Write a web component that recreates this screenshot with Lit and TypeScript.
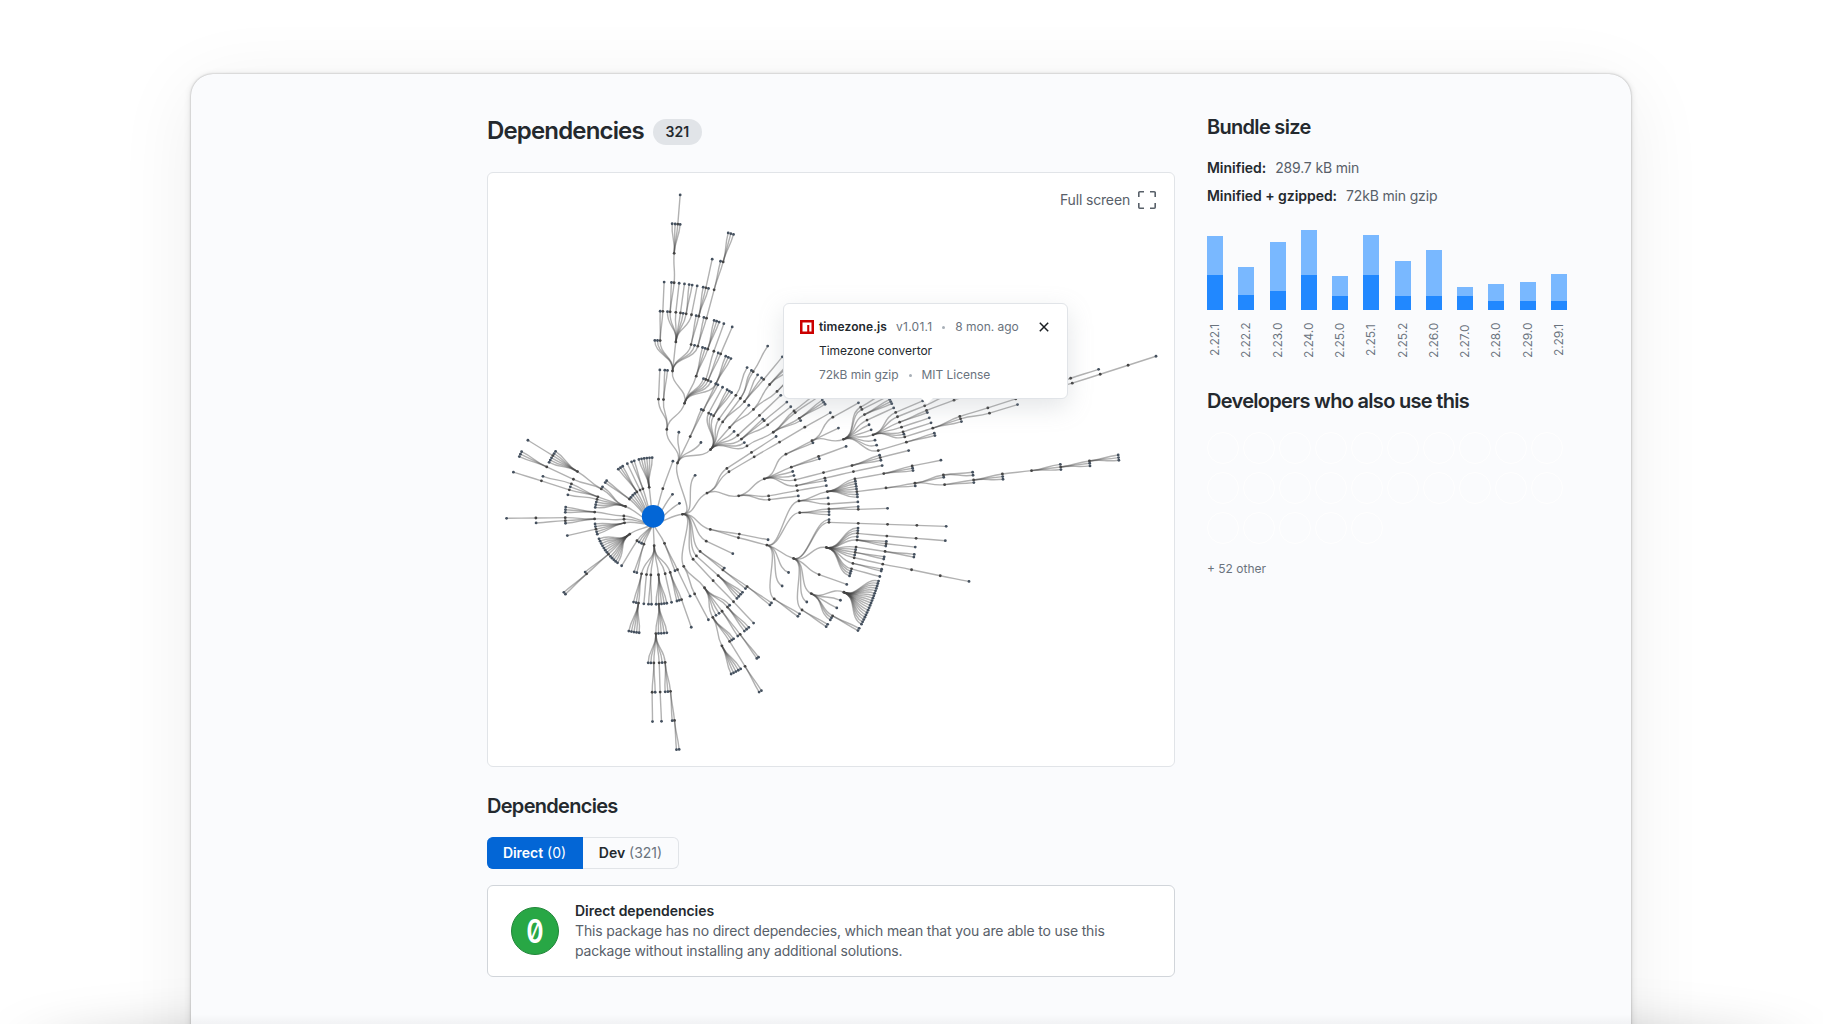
import { LitElement, html, css, svg } from "lit";
import { customElement } from "lit/decorators.js";

type Pt = { x: number; y: number };
interface TreeNode {
  angle: number;
  radius: number;
  children: TreeNode[];
}

// The canvas is divided into tiles; every node is given in the local units of its tile.
const TILES: Record<string, [number, number]> = {
  a: [-520, -1249],
  b: [-40, -709],
  c: [-490, -289],
  d: [-160, 71],
  e: [260, -409],
  f: [350, -679],
};
const RING = 87.95;
const LEAF_GAP = 7.7;

// "x,y" is a node, "x,y~x,y" is a fan of evenly spaced siblings, "( ... )" holds children.
const GRAPH = `
c 577,283 (
  b 113,549 (
    81,448 (
      56,358 ( 60,269 )
      71,358 ( 75,271 83,271 )
      134,370 (
        a 578,813 (
          525,721 533,721 541,721 ( 541,633 549,633 ( 553,545 ) )
          588,726 (
            563,635 571,635 ( 575,547 583,547 ( 583,460 ( 577,371 586,372 594,372 ( 601,285 ) 601,373 ) ) )
            588,637 ( 598,549 ) 602,638 ( 614,551 ) 610,640
            619,642 ( 628,553 637,555 ) 635,644 ( 652,558 )
          )
          634,733 ( 649,647 657,649 ( 670,562 678,564 ( 697,478 ) 686,565 ) )
          644,737
          654,739 ( 672,653 680,655 ( 703,569 ( 722,484 730,486 ( 745,399~761,403 ) ) ) )
        )
        a 649,829 ( 668,743 676,745 684,747 ( 703,661~718,666 ) )
        671,836 678,838 ( 702,754 ( 732,671 ) )
        685,841 ( 715,759 722,763 ( 757,681 ) ) 693,845
        708,852 ( 738,768~753,776 )
      )
    )
    b 117,457
    151,470 ( 184,389 190,392 ( 228,312 234,315 ) )
    183,488
    212,509 (
      206,400 ( 248,322 ) 213,404
      221,408 ( 262,329~275,338 )
      237,418 ( 288,346 ( 321,264 ) )
      249,425 ( 301,356 ( 335,271 340,275 ( 383,199 ) ) 313,366 ( 353,285 365,294 371,299 ( 427,231 ) ) )
      269,443 ( 326,377 340,389 ( 389,314 ( 448,248 452,251 462,260 ) 411,335 ( 472,267 474,272 ) ) )
      282,455
      293,467 ( 358,407 ( 422,347 ) )
      304,478 ( 368,418 372,423 ( 440,367 ) 383,435 ( 452,381 ) )
      312,489
      320,499 ( 400,457 ( 462,393 ( 530,340 ) 466,398 ( 536,350 ) 477,416 ( 546,361~554,374 ) 482,422 ) )
    )
  )
  c 615,167
  b 200,640 (
    260,566 ( 334,518 ( 408,470 ) )
    266,576 ( 342,531 ( 418,487 ( 494,442 ( 570,399 ) ) ) )
    295,648 (
      372,597 (
        437,523 (
          515,483 (
            578,412 ( 655,369 )
            594,445
            611,478 (
              e 361,82 ( 437,36 ) 365,89 ( 444,49 )
              373,104 ( 446,60~454,72 )
              380,121 ( 461,84 )
              386,135 393,150
              398,165 (
                466,98 ( 546,64 ) 471,111 ( 553,78 ( 632,40 ) )
                478,127 ( 559,92 ( 641,61 ( 725,32 ) ) 562,98 )
                484,142 ( 567,114 ) 488,156 ( 572,129 ) 491,163
                494,171 (
                  577,145 (
                    658,110 ( f 653,354 ( 737,327 ( 821,300 ( 902,265 ( 986,238 ) 906,280 ( 990,253 ( 1074,226 ( 1158,199 ) ) ) ) ) ) )
                    e 661,117 ( f 657,370 ( 742,344 ) ) e 664,125
                  )
                )
              )
              404,181 409,196
              414,212 ( 498,187 ( 582,160 584,167 ) )
            )
          )
          b 518,489
        )
        453,562 ( e 235,230 ( 317,200 ) 237,237 )
        b 457,575 461,587
        e 165,300 ( 250,278 ( 335,257 ( 418,226 420,233 ( 505,212 ) 422,241 ) ) )
        169,317 ( 253,295 ( 340,275 ( 425,257 ) ) 255,302 )
      )
      b 385,648 ( 471,632 ( 559,617 ) )
      387,659 ( 474,648 )
    )
  )
  c 660,328 (
    747,342 ( e 83,479 )
    c 745,353 (
      e 80,495 (
        175,363 (
          261,335 (
            343,297 ( 430,281 ( 516,258 ( 601,241 ) 517,265 518,272 ) )
            345,304~349,327
            350,335 ( 437,324 ( 524,310 ( 609,285 ( 697,277 698,286 ) 610,292 f 523,584 ( 610,570 ( 697,552 ( 784,542 ( 871,523 871,531 ( 958,513 ( 1044,495~1045,511 ) 958,520 958,528 ) 871,539 ) ) 697,560 698,568 ) 610,578 ) ) e 524,318 ) )
            351,343 352,351
          )
          263,354
          265,372 ( 353,366 )
        )
        178,398 ( 265,387 ( 353,380 354,388 ( 442,385 ) ) 265,395 266,404 )
        160,535 (
          265,419 265,427 ( 354,430 ( 442,433 ( 529,436 ( 618,439 ) ) ) )
          257,502 (
            353,444 353,452 352,460 ( 439,468 ( 527,475 ( 615,482 ) ) ) 351,470
            350,480 ( 437,484 437,491 ( 524,501 ) 436,498 )
            347,501 ( 434,514 ( 522,523~521,531 ) )
            346,509 345,517 ( 431,530~430,537 ) 343,525 341,533 ( 427,552 ( 514,569 ( 600,587 ( 686,604 ) ) ) )
            338,550 ( 424,567~423,573 )
            333,566 ( 418,589 )
            332,573~327,587
          )
          236,583 ( 320,613 )
          213,640 (
            310,636 ( d 836,123~784,252 )
            e 300,660 289,683
            d 697,227 ( 776,264 773,271 ) 694,233 690,239
          )
          e 199,665
          185,689 ( d 682,252 679,260 )
        )
        e 145,577 125,617
        102,656 ( d 598,221 594,229 )
      )
    )
  )
  c 648,363 ( 727,400 )
  629,393 ( 702,443 698,449 ( d 441,139 ( 514,188 509,194 ) 436,145 ) )
  c 618,406 ( 684,466 ( d 427,156~410,174 ) )
  c 609,417 ( 669,481 ( d 400,184 ( 460,248 ) ) )
  c 581,438 (
    d 313,142 (
      388,194 382,200 ( 446,261~432,271 )
      366,213 ( 420,282 ( 475,350 470,354 ) 413,287 )
      357,219 348,225
      339,232 ( 401,296 395,299 388,302 ( 435,378 ( 484,451 477,455 ) ) 366,317 ( 422,386~394,402 ) )
    )
    284,161 ( 325,238 )
  )
)
c 519,206 ( 549,124 ) 547,224 567,251
478,202 ( 447,117~487,113 )
459,206 ( 425,125~433,122 )
450,209 ( 412,130 )
440,214 ( 385,147~398,138 )
434,219~422,231
417,236 ( 349,181 345,187 )
406,259 (
  337,200
  333,206 ( 262,154 ( 196,93 192,100 188,106 ( 113,60 ) 184,113~176,126 ) 249,177 ( 169,140 ( 93,94~87,109 ) ) )
  323,230 ( 243,191 ( 157,168 ) 240,200 237,209 ( 153,182 ( 69,156 ) ) )
  321,238 ( 232,224 )
  319,246~315,262
)
400,288 ( 312,276 ( 225,261~225,277 ) )
401,298 ( 312,297 ( 224,293 ( 137,294 ( 48,295 ) ) 224,302 ( 137,309 ) 225,310 ) )
402,309 ( 313,312 315,320 316,328 ( 231,347 ) 318,336 321,343 )
419,343 ( 326,357~350,398 354,404 ( 285,457 290,462 ( 221,518 226,523 ) ) 360,411~382,430 )
441,363 ( 395,438 ) 448,366~455,370
462,373 ( 433,456 441,458 )
493,377 (
  455,462 ( d 101,187~109,188 116,189 ( 87,273~118,278 ) )
  140,104 ( 132,191 ) 153,104 ( 146,192 155,192 )
  176,104 ( 169,192 177,192 ( 168,281 ( 145,368~153,368 162,368 ( 157,457 ( 158,544 ) 166,457 ) 178,367 ( 181,457 ( 185,544 ) ) 187,367 196,367 ( 196,455~204,454 212,454 ( 217,541 224,541 ( 230,629 238,628 ) ) ) ) 176,280~201,278 ) 185,192~201,190 )
  196,101 ( 215,186 )
  211,97 ( 231,182~238,180 245,178 ( 274,261 ) )
)
c 524,370 ( 555,451 563,449 ( 600,527 ) )
`;

function makeNode(x: number, y: number): TreeNode {
  return {
    angle: Math.atan2(y, x),
    radius: Math.round(Math.hypot(x, y) / RING) * RING,
    children: [],
  };
}

function parseGraph(source: string): TreeNode {
  const root: TreeNode = { angle: Math.PI / 2, radius: 0, children: [] };
  const stack: TreeNode[] = [root];
  let last = root;
  let tile = TILES.a;
  for (const token of source.trim().split(/\s+/)) {
    const parent = stack[stack.length - 1];
    if (token in TILES) tile = TILES[token];
    else if (token === "(") stack.push(last);
    else if (token === ")") stack.pop();
    else {
      const [x0, y0, x1 = x0, y1 = y0] = token.split(/[,~]/).map(Number);
      const steps = Math.round(Math.hypot(x1 - x0, y1 - y0) / LEAF_GAP);
      for (let i = 0; i <= steps; i++) {
        const t = steps ? i / steps : 0;
        last = makeNode(x0 + (x1 - x0) * t + tile[0], y0 + (y1 - y0) * t + tile[1]);
        parent.children.push(last);
      }
    }
  }
  return root;
}

const polar = (angle: number, radius: number): Pt => ({
  x: Math.round(Math.cos(angle) * radius * 10) / 10,
  y: Math.round(Math.sin(angle) * radius * 10) / 10,
});

const links: string[] = [];
const inner: Pt[] = [];
const leaves: Pt[] = [];

function collect(node: TreeNode) {
  const from = polar(node.angle, node.radius);
  for (const child of node.children) {
    const middle = (node.radius + child.radius) / 2;
    const c1 = polar(node.angle, middle);
    const c2 = polar(child.angle, middle);
    const to = polar(child.angle, child.radius);
    links.push(`M${from.x},${from.y}C${c1.x},${c1.y} ${c2.x},${c2.y} ${to.x},${to.y}`);
    (child.children.length ? inner : leaves).push(to);
    collect(child);
  }
}
collect(parseGraph(GRAPH));

@customElement("dependency-graph")
class DependencyGraph extends LitElement {
  static styles = css`
    :host { display: block; height: 100%; }
    svg { display: block; width: 100%; height: 100%; }
    .link { fill: none; stroke: #444; stroke-opacity: 0.42; stroke-width: 4.2; }
    .inner { fill: #444; }
    .leaf { fill: #44505e; }
    .root { fill: #0366d6; }
  `;
  render() {
    return html`<svg viewBox="-495.5 -1030 2058 1779" preserveAspectRatio="xMinYMin meet">
      ${links.map((d) => svg`<path class="link" d=${d}></path>`)}
      ${inner.map((p) => svg`<circle class="inner" cx=${p.x} cy=${p.y} r="4.2"></circle>`)}
      ${leaves.map((p) => svg`<circle class="leaf" cx=${p.x} cy=${p.y} r="4.2"></circle>`)}
      <circle class="root" r="34"></circle>
    </svg>`;
  }
}

const VERSIONS: [string, number, number][] = [
  ["2.22.1", 39, 35], ["2.22.2", 28, 15], ["2.23.0", 49, 19], ["2.24.0", 45, 35],
  ["2.25.0", 20, 14], ["2.25.1", 40, 35], ["2.25.2", 35, 14], ["2.26.0", 46, 14],
  ["2.27.0", 9, 14], ["2.28.0", 17, 9], ["2.29.0", 19, 9], ["2.29.1", 27, 9],
];

@customElement("app-root")
class AppRoot extends LitElement {
  static styles = css`
    :host {
      display: block;
      height: 1024px;
      overflow: hidden;
      position: relative;
      background: #fff;
      color: #24292e;
      font-family: Inter, "Liberation Sans", sans-serif;
      font-size: 14px;
      line-height: 20px;
      letter-spacing: -0.16px;
    }
    * { box-sizing: border-box; }
    h1, h2, p { margin: 0; }
    b { font-weight: 600; letter-spacing: -0.04px; }
    .window {
      width: 1440px;
      height: 1100px;
      margin: 74px 0 0 191px;
      padding: 40px 0 0 296px;
      border-radius: 22px;
      background: #fafbfd;
      box-shadow: 0 0 2px rgba(0, 0, 0, 0.32), 0 1px 7px rgba(0, 0, 0, 0.13), 0 14px 80px rgba(0, 0, 0, 0.07);
      display: grid;
      grid-template-columns: 688px 361px;
      column-gap: 32px;
      align-content: start;
    }
    .floor {
      position: absolute;
      left: 40px;
      right: 40px;
      top: 1044px;
      height: 60px;
      border-radius: 50%;
      box-shadow: 0 0 64px 14px rgba(0, 0, 0, 0.38);
    }
    .fade {
      position: absolute; left: 191px; width: 1440px; bottom: 0; height: 10px;
      background: linear-gradient(rgba(0, 0, 0, 0), rgba(0, 0, 0, 0.035));
    }
    .frame { position: relative; }
    .heading { display: flex; align-items: center; gap: 9px; height: 34px; }
    h1 { font-size: 24px; line-height: 32px; font-weight: 600; letter-spacing: -0.84px; }
    .count {
      height: 26px; width: 49px; margin-top: 2px; border-radius: 13px; background: #e1e4e8;
      font-size: 14px; line-height: 26px; font-weight: 600; text-align: center; letter-spacing: 0;
    }
    .canvas {
      position: relative; height: 595px; margin-top: 24px;
      border: 1px solid #e1e4e8; border-radius: 6px; background: #fff;
    }
    .canvas dependency-graph { height: 593px; width: 686px; }
    .full {
      position: absolute; right: 18px; top: 17px; display: flex; align-items: center; gap: 8px;
      color: #586069; font-size: 14px;
    }
    .full svg { display: block; }
    .tip {
      position: absolute; left: 295px; top: 130px; width: 285px; height: 96px;
      padding: 14px 18px 0 16px; border: 1px solid #e1e4e8; border-radius: 6px; background: #fff;
      box-shadow: 0 8px 24px rgba(149, 157, 165, 0.25);
      font-size: 12px; line-height: 18px; color: #6a737d; letter-spacing: -0.04px;
    }
    .tip::after {
      content: ""; position: absolute; left: 137px; top: 94px;
      border: 6px solid transparent; border-bottom-width: 0; border-top-color: #fff;
    }
    .row { display: flex; align-items: center; height: 18px; margin-bottom: 6px; }
    .row.sub { padding-left: 19px; }
    .row svg { display: block; }
    .name { margin: 0 9px 0 5px; color: #24292e; font-weight: 600; letter-spacing: 0.1px; }
    .version { letter-spacing: 0.25px; }
    .bullet { width: 3px; height: 3px; border-radius: 50%; background: #a8afb7; margin: 1px 10px 0; }
    .close { margin-left: auto; }
    .dark { color: #24292e; }
    h2 { font-size: 20px; line-height: 26px; font-weight: 600; letter-spacing: -0.7px; }
    .h2-dependencies { margin-top: 26px; }
    .h2-developers { margin-top: 30px; }
    .tabs { display: flex; margin-top: 18px; height: 32px; width: 192px; }
    .tab {
      display: flex; flex: 1; align-items: center; justify-content: center; gap: 4px; letter-spacing: 0;
      border: 1px solid #e1e4e8; border-left: 0; border-radius: 0 6px 6px 0; color: #6a737d;
    }
    .tab b { color: #24292e; }
    .tab.on { background: #0366d6; border-color: #0366d6; border-radius: 6px 0 0 6px; color: #fff; }
    .tab.on b { color: #fff; }
    .note {
      display: flex; align-items: center; height: 92px; margin-top: 16px; padding: 0 23px;
      border: 1px solid #d1d5da; border-radius: 6px; background: #fff; gap: 16px; color: #586069;
    }
    .zero {
      flex: none; width: 48px; height: 48px; border-radius: 50%; border: 1.5px solid #22863a; background: #28a745;
      display: flex; align-items: center; justify-content: center; color: #fff;
    }
    .zero span {
      font-size: 33px; font-weight: 600; line-height: 46px; letter-spacing: 0;
      font-feature-settings: "zero"; transform: scaleX(0.8);
    }
    .note b { display: block; color: #24292e; }
    .list { margin-top: 18px; display: grid; row-gap: 8px; color: #586069; }
    .list b { color: #24292e; margin-right: 9px; }
    .chart { display: flex; justify-content: space-between; align-items: flex-end; height: 80px; margin-top: 24px; width: 360px; }
    .bar { width: 16px; display: flex; flex-direction: column; }
    .light { background: #79b8ff; }
    .blue { background: #2188ff; }
    .labels { display: flex; justify-content: space-between; width: 360px; height: 34px; margin-top: 14px; }
    .label {
      width: 16px; height: 34px; line-height: 16px; font-size: 12px; color: #6a737d; letter-spacing: -0.1px;
      writing-mode: vertical-rl; transform: rotate(180deg); text-align: right;
    }
    .people { display: grid; grid-template-columns: repeat(10, 32px); gap: 8px 4px; margin-top: 18px; }
    .person { width: 32px; height: 32px; border: 1.5px solid #fff; border-radius: 50%; }
    .others { margin-top: 15px; font-size: 12px; color: #6a737d; letter-spacing: 0; }
  `;

  render() {
    return html`
      <div class="floor"></div>
      <div class="frame">
        <main class="window">
          <section>
            <div class="heading"><h1>Dependencies</h1><span class="count">321</span></div>
            <div class="canvas">
              <dependency-graph></dependency-graph>
              <div class="full">
                Full screen
                <svg width="18" height="18" fill="none" stroke="#586069" stroke-width="1.6">
                  <path d="M0.8 6V1.8a1 1 0 0 1 1-1H6M12 .8h4.2a1 1 0 0 1 1 1V6M17.2 12v4.2a1 1 0 0 1-1 1H12M6 17.2H1.8a1 1 0 0 1-1-1V12"></path>
                </svg>
              </div>
              <div class="tip">
                <div class="row">
                  <svg width="14" height="14"><rect width="14" height="14" fill="#cb0000"></rect><path fill="#fff" d="M2.5 2.5h9v9H9.3V5H7.2v6.5H2.5z"></path></svg>
                  <span class="name">timezone.js</span><span class="version">v1.01.1</span><i class="bullet"></i>8 mon. ago
                  <svg class="close" width="10" height="10" stroke="#1b1f23" stroke-width="1.5"><path d="M.8.8l8.4 8.4M9.2.8L.8 9.2"></path></svg>
                </div>
                <div class="row sub dark">Timezone convertor</div>
                <div class="row sub">72kB min gzip<i class="bullet"></i>MIT License</div>
              </div>
            </div>
            <h2 class="h2-dependencies">Dependencies</h2>
            <div class="tabs">
              <div class="tab on"><b>Direct</b>(0)</div>
              <div class="tab"><b>Dev</b>(321)</div>
            </div>
            <div class="note">
              <div class="zero"><span>0</span></div>
              <p><b>Direct dependencies</b>This package has no direct dependecies, which mean that you are able to use this<br />package without installing any additional solutions.</p>
            </div>
          </section>
          <aside>
            <h2>Bundle size</h2>
            <div class="list">
              <p><b>Minified:</b>289.7 kB min</p>
              <p><b>Minified + gzipped:</b>72kB min gzip</p>
            </div>
            <div class="chart">
              ${VERSIONS.map(([, light, blue]) => html`<div class="bar">
                <div class="light" style="height:${light}px"></div>
                <div class="blue" style="height:${blue}px"></div>
              </div>`)}
            </div>
            <div class="labels">${VERSIONS.map(([label]) => html`<span class="label">${label}</span>`)}</div>
            <h2 class="h2-developers">Developers who also use this</h2>
            <div class="people">${Array.from({ length: 25 }, () => html`<i class="person"></i>`)}</div>
            <p class="others">+ 52 other</p>
          </aside>
        </main>
      </div>
      <div class="fade"></div>
    `;
  }
}
